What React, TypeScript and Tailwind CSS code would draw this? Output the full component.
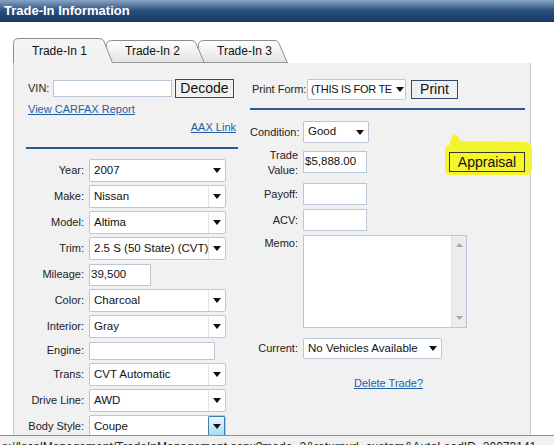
import React from "react";

const font = { fontFamily: '"Liberation Sans", Arial, sans-serif' };

function Arrow() {
  return (
    <svg width="8" height="5" viewBox="0 0 8 5" className="shrink-0">
      <path d="M0 0 L8 0 L4 5 Z" fill="#111" />
    </svg>
  );
}

function Select({
  width,
  height = 23,
  value,
  sep = true,
  hot = false,
  arrowW = 17,
  small = false,
}: {
  width: number;
  height?: number;
  value: string;
  sep?: boolean;
  hot?: boolean;
  arrowW?: number;
  small?: boolean;
}) {
  return (
    <div
      className={`shrink-0 flex items-stretch bg-white border border-[#b9c7d8] rounded-[2px] text-[#111] ${
        small ? "text-[11px] tracking-[-0.3px]" : "text-[11.5px]"
      }`}
      style={{ width, height }}
    >
      <div className={`flex-1 flex items-center overflow-hidden whitespace-nowrap ${small ? "pl-[3px]" : "pl-[4px]"}`}>
        {value}
      </div>
      <div
        style={{ width: arrowW }}
        className={
          hot
            ? "flex items-center justify-center border border-[#3c7fb1] bg-gradient-to-b from-[#eaf6fd] to-[#a7d9f5] rounded-[1px]"
            : sep
            ? "flex items-center justify-center border-l border-[#dfe5ee]"
            : "flex items-center justify-center"
        }
      >
        <Arrow />
      </div>
    </div>
  );
}

function Input({ width, height = 22, value = "" }: { width: number; height?: number; value?: string }) {
  return (
    <div
      className="shrink-0 bg-white border border-[#b9c7d8] text-[11.5px] text-[#111] flex items-center pl-[1px] whitespace-nowrap"
      style={{ width, height }}
    >
      {value}
    </div>
  );
}

function Row({ label, children, h = 23 }: { label: string; children: React.ReactNode; h?: number }) {
  return (
    <div className="shrink-0 flex items-center" style={{ height: h }}>
      <div className="w-[58px] text-right text-[11px] text-[#222] pr-[5px] box-content">{label}</div>
      {children}
    </div>
  );
}

function Tab({
  label,
  width,
  active,
  z,
  first,
}: {
  label: string;
  width: number;
  active?: boolean;
  z: string;
  first?: boolean;
}) {
  const w = width;
  const top = active ? 0.5 : 2.5;
  const d = `M0.5 25 L0.5 ${top + 5} Q0.5 ${top} 5.5 ${top} L${w - 13} ${top} Q${w - 10} ${top} ${w - 9} ${top + 3} L${w - 0.5} 25`;
  const id = `g${label.slice(-1)}`;
  return (
    <div className={`relative h-[25px] ${z} ${first ? "" : "-ml-[7px]"}`} style={{ width: w }}>
      <svg width={w} height="25" className="absolute inset-0">
        <defs>
          <linearGradient id={id} x1="0" y1="0" x2="0" y2="1">
            <stop offset="0" stopColor={active ? "#f4f4f4" : "#ffffff"} />
            <stop offset="1" stopColor={active ? "#f1f1f1" : "#e2e2e2"} />
          </linearGradient>
        </defs>
        <path d={d + " Z"} fill={`url(#${id})`} />
        <path d={d} fill="none" stroke="#8d8d8d" strokeWidth="1" />
        {!active && <line x1="0" y1="24.5" x2={w} y2="24.5" stroke="#9a9a9a" />}
      </svg>
      <div className="relative pl-[19px] pt-[6px] text-[12px] text-[#111] leading-[14px]">{label}</div>
    </div>
  );
}

function Btn({ children, w, cls = "" }: { children: React.ReactNode; w: number; cls?: string }) {
  return (
    <div
      className={`shrink-0 h-[19px] flex items-center justify-center text-[14px] text-[#111] border border-[#2d4c70] ${cls}`}
      style={{ width: w }}
    >
      {children}
    </div>
  );
}

export default function App() {
  return (
    <div className="relative w-[554px] h-[445px] overflow-hidden bg-white" style={font}>
      <div className="h-[22px] bg-gradient-to-b from-[#87a4c4] via-[#2a4e7c] to-[#173a66] pl-[4px] text-white font-bold text-[13px] leading-[21px]">
        Trade-In Information
      </div>

      <div className="flex mt-[16px] ml-[13px]">
        <Tab label="Trade-In 1" width={100} active z="z-30" first />
        <Tab label="Trade-In 2" width={99} z="z-20" />
        <Tab label="Trade-In 3" width={90} z="z-10" />
      </div>

      <div className="ml-[13px] w-[518px] h-[400px] bg-[#f1f1f1] border-l border-r border-[#c9c9c9] flex items-start">
        {/* left column */}
        <div className="w-[234px] pl-[12px] pt-[16px] flex flex-col">
          <div className="flex items-center h-[19px]">
            <span className="ml-[2px] w-[25px] text-[11px] text-[#222]">VIN:</span>
            <Input width={119} height={17} />
            <Btn w={59} cls="ml-[3px] bg-[#f0f0f0]">Decode</Btn>
          </div>
          <a className="mt-[4px] ml-[2px] text-[11px] leading-[14px] text-[#1d5fa6] underline">View CARFAX Report</a>
          <a className="mt-[4px] self-end mr-[12px] text-[11px] leading-[14px] text-[#1d5fa6] underline">AAX Link</a>
          <div className="shrink-0 mt-[13px] w-[212px] h-[2px] bg-[#2a5890]" />
          <div className="mt-[10px] flex flex-col gap-[3px]">
            <Row label="Year:"><Select width={137} value="2007" sep={false} /></Row>
            <Row label="Make:"><Select width={137} value="Nissan" /></Row>
            <Row label="Model:"><Select width={137} value="Altima" /></Row>
            <Row label="Trim:"><Select width={137} value="2.5 S (50 State) (CVT)" /></Row>
            <Row label="Mileage:"><Input width={62} value="39,500" /></Row>
            <Row label="Color:"><Select width={137} value="Charcoal" /></Row>
            <Row label="Interior:"><Select width={137} value="Gray" /></Row>
            <Row label="Engine:" h={19}><Input width={126} height={18} /></Row>
            <Row label="Trans:"><Select width={137} value="CVT Automatic" /></Row>
            <Row label="Drive Line:"><Select width={137} value="AWD" /></Row>
            <Row label="Body Style:"><Select width={137} value="Coupe" hot /></Row>
          </div>
        </div>

        {/* right column */}
        <div className="w-[277px] ml-[2px] pt-[16px] flex flex-col">
          <div className="flex items-center h-[21px]">
            <span className="ml-[2px] w-[55px] text-[11px] text-[#222]">Print Form:</span>
            <Select width={99} height={21} value="(THIS IS FOR TE" sep={false} arrowW={11} small />
            <Btn w={47} cls="ml-[5px] bg-[#f0f0f0]">Print</Btn>
          </div>
          <div className="shrink-0 mt-[8px] w-[275px] h-[2px] bg-[#2a5890]" />

          <div className="mt-[11px] flex items-center h-[22px]">
            <span className="w-[48px] mr-[5px] text-right text-[11px] text-[#222]">Condition:</span>
            <Select width={66} height={22} value="Good" sep={false} />
          </div>

          <div className="mt-[4px] flex items-center h-[30px]">
            <span className="w-[48px] mr-[5px] pt-[2px] text-right text-[11px] leading-[15px] text-[#222]">
              Trade
              <br />
              Value:
            </span>
            <Input width={64} value="$5,888.00" />
            <div className="relative ml-auto mr-[2px]">
              <svg width="87" height="43" viewBox="0 0 87 43" className="absolute -left-[4px] -top-[19px]">
                <path
                  d="M5 12 C5 4 9 0 12 2 C14 4 13 7 17 8 L80 9 C85 9 87 12 87 16 L87 36 C87 40 84 42 80 42 L6 42 C2 42 0 40 0 36 L0 18 C0 14 2 12 5 12 Z"
                  fill="#f3f32e"
                />
              </svg>
              <Btn w={76} cls="relative h-[20px] bg-[#f5f52c] border-[#3a3a2a]">Appraisal</Btn>
            </div>
          </div>

          <div className="mt-[6px] flex items-center h-[22px]">
            <span className="w-[48px] mr-[5px] text-right text-[11px] text-[#222]">Payoff:</span>
            <Input width={64} />
          </div>
          <div className="mt-[4px] flex items-center h-[22px]">
            <span className="w-[48px] mr-[5px] text-right text-[11px] text-[#222]">ACV:</span>
            <Input width={64} />
          </div>
          <div className="mt-[4px] flex items-start">
            <span className="w-[48px] mr-[5px] text-right text-[11px] text-[#222]">Memo:</span>
            <div className="w-[164px] h-[93px] bg-white border border-[#b9c7d8] flex justify-end">
              <div className="w-[15px] h-full bg-[#ececec] border-l border-[#e0e0e0] flex flex-col items-center justify-between py-[7px]">
                <svg width="7" height="4" viewBox="0 0 7 4"><path d="M0 4 L7 4 L3.5 0 Z" fill="#a8a8a8" /></svg>
                <svg width="7" height="4" viewBox="0 0 7 4"><path d="M0 0 L7 0 L3.5 4 Z" fill="#a8a8a8" /></svg>
              </div>
            </div>
          </div>
          <div className="mt-[10px] flex items-center h-[21px]">
            <span className="w-[48px] mr-[5px] text-right text-[11px] text-[#222]">Current:</span>
            <Select width={139} height={21} value="No Vehicles Available" sep={false} />
          </div>
          <div className="mt-[17px] text-center text-[11px] leading-[14px]">
            <a className="text-[#1d5fa6] underline">Delete Trade?</a>
          </div>
        </div>
      </div>

      <div className="absolute left-0 right-0 top-[435px] h-[20px] border-t border-[#8f8f8f] bg-[#f0f0f0] pt-[4px] pl-[2px] text-[12px] leading-[14px] text-[#222] whitespace-nowrap">
        s://localManagement/TradeInManagement.aspx?mode=2&amp;returnurl=custom&amp;AutoLeadID=20073141
      </div>
    </div>
  );
}
